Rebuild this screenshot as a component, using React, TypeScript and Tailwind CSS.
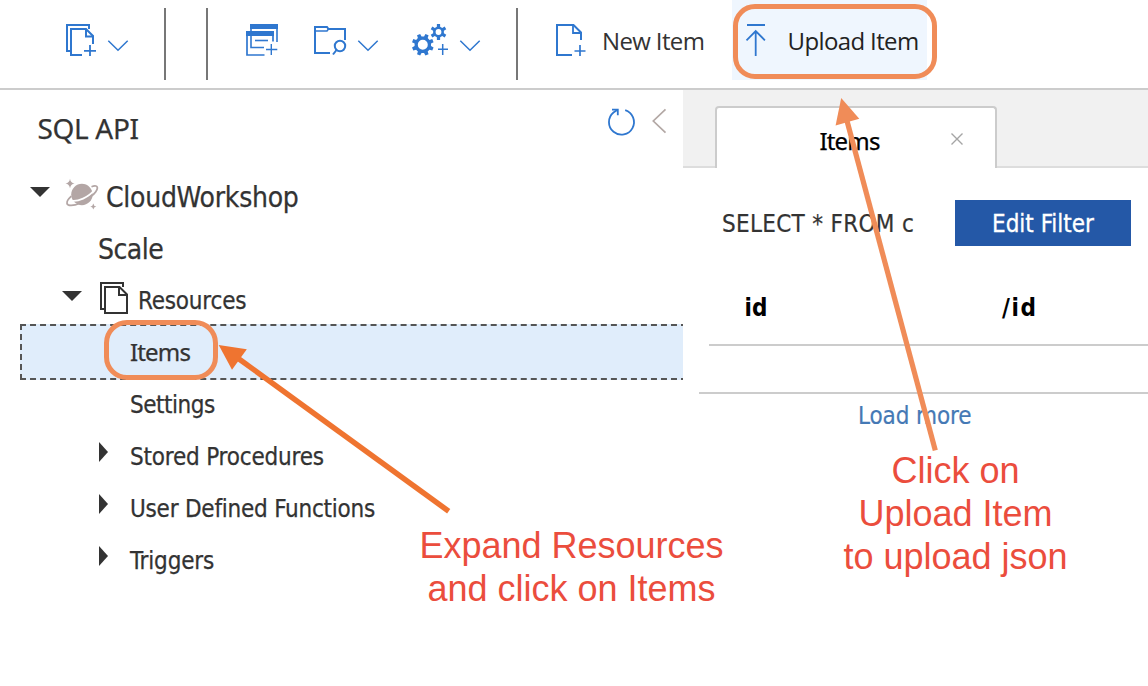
import type { ReactNode } from 'react';

const BLUE = '#2f77cf';

function Icon({ box, className = '', children }: { box: string; className?: string; children: ReactNode }) {
  const [, , w, h] = box.split(' ');
  return (
    <svg viewBox={box} width={w} height={h} fill="none" className={`shrink-0 ${className}`}>
      {children}
    </svg>
  );
}

function gear(cx: number, cy: number, teeth: number, root: number, outer: number, half: number, offset: number) {
  const points: string[] = [];
  const step = 360 / teeth;
  const at = (r: number, deg: number) => {
    const a = (deg * Math.PI) / 180;
    points.push(`${(cx + r * Math.sin(a)).toFixed(2)} ${(cy - r * Math.cos(a)).toFixed(2)}`);
  };
  for (let i = 0; i < teeth; i++) {
    const c = offset + i * step;
    at(root, c - half * 1.25);
    at(outer, c - half * 0.8);
    at(outer, c + half * 0.8);
    at(root, c + half * 1.25);
  }
  return `M${points.join('L')}Z`;
}

function hole(cx: number, cy: number, r: number) {
  return `M${cx - r} ${cy}a${r} ${r} 0 1 0 ${2 * r} 0a${r} ${r} 0 1 0 ${-2 * r} 0Z`;
}

function Chevron({ className = '' }: { className?: string }) {
  return (
    <Icon box="0 0 24 36" className={className}>
      <path d="M2.3 18.7 12 28.3 21.7 18.7" stroke={BLUE} strokeWidth="1.5" />
    </Icon>
  );
}

function Separator({ className = '' }: { className?: string }) {
  return <div className={`h-[72px] w-0.5 shrink-0 self-end bg-[#777] ${className}`} />;
}

function Toolbar() {
  return (
    <header className="h-[90px] shrink-0 border-b-2 border-[#ccc]">
      <div className="flex h-20 items-center">
        <Icon box="64 22 34 36" className="ml-16">
          <path d="M89 29V25H67V51H70.5" stroke={BLUE} strokeWidth="2" />
          <path d="M82 55H71V29H86L93 36V44" stroke={BLUE} strokeWidth="2" />
          <path d="M86 29V36.5H93.5" stroke={BLUE} strokeWidth="2" />
          <path d="M84 50.8H96M90 45V56" stroke={BLUE} strokeWidth="1.8" />
        </Icon>
        <Chevron className="ml-2" />
        <Separator className="ml-[34px]" />
        <Separator className="ml-10" />
        <Icon box="244 22 36 36" className="ml-9">
          <path d="M250 24H278V29H250Z" fill={BLUE} />
          <path d="M251 28V47.5H264M277 28V42" stroke={BLUE} strokeWidth="1.6" />
          <path d="M246 31H274V36H246Z" fill={BLUE} />
          <path d="M247 35V55H264.5M273 35V41.5" stroke={BLUE} strokeWidth="1.7" />
          <path d="M255 40.5H268" stroke={BLUE} strokeWidth="1.6" />
          <path d="M266 49.5H277.3M271.3 44V55" stroke={BLUE} strokeWidth="1.4" />
        </Icon>
        <Icon box="312 22 38 36" className="ml-8">
          <path d="M330 53H315V27H327L328.5 29H345V40" stroke={BLUE} strokeWidth="2" />
          <path d="M315 31H327L328.5 29" stroke={BLUE} strokeWidth="1.6" />
          <circle cx="340" cy="46" r="5.2" stroke={BLUE} strokeWidth="2" />
          <path d="M336.5 50 333 54.5" stroke={BLUE} strokeWidth="2" />
        </Icon>
        <Chevron className="ml-1.5" />
        <Icon box="410 22 40 36" className="ml-[30px]">
          <path d={gear(422.8, 44.8, 8, 8.3, 11.1, 11, 22.5) + hole(422.8, 44.8, 5)} fill={BLUE} fillRule="evenodd" />
          <path d={gear(438.5, 32, 6, 5.5, 8.2, 14, 0) + hole(438.5, 32, 2.9)} fill={BLUE} fillRule="evenodd" />
          <path d="M438 49.3H448M442.7 44V55" stroke={BLUE} strokeWidth="1.5" />
        </Icon>
        <Chevron className="ml-2" />
        <Separator className="ml-[34px]" />
        <Icon box="554 22 34 36" className="ml-9">
          <path d="M572 55H557V25H573.5L581 32.5V40" stroke={BLUE} strokeWidth="2" />
          <path d="M573 25V33H581" stroke={BLUE} strokeWidth="1.8" />
          <path d="M574.5 51H585.5M580 45V56" stroke={BLUE} strokeWidth="1.7" />
        </Icon>
        <span className="ml-[14px] w-[130px] whitespace-nowrap pt-px font-['Open_Sans',sans-serif] text-2xl tracking-[-0.64px] text-[#333]">
          New Item
        </span>
        <button className="flex h-20 w-[195px] items-center bg-[#eff6fe]">
          <Icon box="744 22 24 36" className="ml-3">
            <path d="M747 25H765" stroke={BLUE} strokeWidth="2" />
            <path d="M755.7 56V31M746.5 40.3 755.7 31 764.9 40.3" stroke={BLUE} strokeWidth="1.8" />
          </Icon>
          <span className="ml-[19.5px] whitespace-nowrap pt-px font-['Open_Sans',sans-serif] text-2xl tracking-[-0.62px] text-[#222]">
            Upload Item
          </span>
        </button>
      </div>
    </header>
  );
}

function Expanded({ className = '' }: { className?: string }) {
  return (
    <Icon box="0 0 20 10" className={className}>
      <path d="M0 0H20L10 10Z" fill="#333" />
    </Icon>
  );
}

function LeafRow({ label, tracking, collapsed }: { label: string; tracking: string; collapsed?: boolean }) {
  return (
    <li className="flex h-[52px] items-center">
      <div className="flex w-[130px] shrink-0 pb-2 pl-[99px]">
        {collapsed && (
          <Icon box="0 0 9 20">
            <path d="M0 0V20L9 10Z" fill="#333" />
          </Icon>
        )}
      </div>
      <span className={`whitespace-nowrap pt-0.5 text-2xl ${tracking}`}>{label}</span>
    </li>
  );
}

function Sidebar() {
  return (
    <aside className="w-[683px] shrink-0 overflow-hidden pt-3 text-[#333] [-webkit-text-stroke:0.25px_#333]">
      <div className="flex h-[52px] items-center pl-[37.5px]">
        <h1 className="w-[568.5px] font-['Noto_Sans',sans-serif] text-[28px] tracking-[-0.34px]">SQL API</h1>
        <Icon box="606 106 32 32" className="mb-3">
          <path d="M625.2 110.2A12.5 12.5 0 1 1 613.5 112.5L617.5 109.8" stroke={BLUE} strokeWidth="1.8" />
          <path d="M612 109.6H617.8V115.2" stroke={BLUE} strokeWidth="1.8" />
        </Icon>
        <Icon box="650 107 18 28" className="mb-3.5 ml-3">
          <path d="M665.5 109.3 653.3 121 665.5 132.7" stroke="#b3a8a5" strokeWidth="1.7" />
        </Icon>
      </div>
      <ul className="mt-4">
        <li className="flex h-[52px] items-center">
          <Expanded className="mb-2 ml-[30px]" />
          <Icon box="64 177 36 34" className="mb-1 ml-3.5">
            <g fill="#b3a6a5">
              <circle cx="81.9" cy="194.5" r="10.7" />
              <path d="M70 178.700Q70.600 183 74.500 183.500Q70.600 184 70 188.300Q69.400 184 65.500 183.500Q69.400 183 70 178.700Z" />
              <path d="M93.300 203.500Q93.700 206.200 96.300 206.500Q93.700 206.900 93.300 209.500Q92.900 206.900 90.300 206.500Q92.900 206.200 93.300 203.500Z" />
            </g>
            <path d="M70.500 200.500C77 202.500 89.500 197 94.500 189.500" stroke="#fff" strokeWidth="1.8" />
            <path
              d="M91.500 186.700C95 185.200 97.800 185.700 97.300 188.500C96.500 192.500 89 199.500 80 203.300C73 206.200 67.300 206 67 203.300C66.800 201.300 68.500 198.800 71.300 196.200"
              stroke="#b3a6a5"
              strokeWidth="1.7"
            />
          </Icon>
          <span className="ml-1.5 pt-1 text-[28px] tracking-[-0.27px]">CloudWorkshop</span>
        </li>
        <li className="flex h-[52px] items-center pl-[98px] pt-1 text-[28px] tracking-[-0.5px]">Scale</li>
        <li className="flex h-[52px] items-center">
          <Expanded className="mb-2 ml-[62px]" />
          <Icon box="99 281 30 34" className="mb-1 ml-[17px]">
            <path d="M104.5 309H101V283H123V287" stroke="#333" strokeWidth="2" />
            <path d="M105 287H119.5L127 294.5V313H105Z" stroke="#333" strokeWidth="2" />
            <path d="M119 287V295H127" stroke="#333" strokeWidth="2" />
          </Icon>
          <span className="ml-[9px] pt-0.5 text-2xl tracking-[-0.2px]">Resources</span>
        </li>
        <li className="-my-0.5 -mr-1 ml-5 flex h-14 items-center border-2 border-dashed border-[#555] bg-[#e0edfb] pl-[108px]">
          <span className="font-['Noto_Sans',sans-serif] text-2xl tracking-[-0.85px]">Items</span>
        </li>
        <LeafRow label="Settings" tracking="tracking-[-0.48px]" />
        <LeafRow label="Stored Procedures" tracking="tracking-[-0.2px]" collapsed />
        <LeafRow label="User Defined Functions" tracking="tracking-[-0.23px]" collapsed />
        <LeafRow label="Triggers" tracking="tracking-[-0.15px]" collapsed />
      </ul>
    </aside>
  );
}

function DocumentsPane() {
  return (
    <main className="min-w-0 flex-1">
      <div className="flex h-[78px] items-end bg-[#f1f1f1]">
        <div className="w-8 self-stretch border-b-2 border-[#ddd]" />
        <div className="flex h-[62px] w-[282px] items-center rounded-t-[4px] border-x-2 border-t-2 border-[#ccc] bg-white text-black">
          <span className="w-[234px] pl-[102.5px] pt-1.5 font-['Noto_Sans',sans-serif] text-2xl tracking-[-0.85px] [-webkit-text-stroke:0.25px_#000]">
            Items
          </span>
          <Icon box="0 0 12 12" className="mt-0.5">
            <path d="M0.5 0.5 11.5 11.5M11.5 0.5 0.5 11.5" stroke="#a5a5a5" strokeWidth="1.4" />
          </Icon>
        </div>
        <div className="flex-1 self-stretch border-b-2 border-[#ddd]" />
      </div>
      <div className="mt-8 flex h-[46px] items-center pl-[39px]">
        <span className="w-[233px] whitespace-nowrap pt-0.5 text-2xl tracking-[0.3px] text-[#333] [-webkit-text-stroke:0.2px_#333]">
          SELECT * FROM c
        </span>
        <button className="h-[46px] w-[176px] bg-[#2458a7] pt-0.5 text-2xl text-white [-webkit-text-stroke:0.3px_#fff]">
          Edit Filter
        </button>
      </div>
      <div className="ml-[26px] mt-[26px] flex h-[74px] items-center border-b-2 border-[#ccc] pb-px text-2xl font-bold text-black">
        <span className="w-[257px] pl-[35.5px]">id</span>
        <span className="pl-9 tracking-[1.6px]">/id</span>
      </div>
      <div className="ml-4 h-12 border-b-2 border-[#ccc]" />
      <a className="ml-[175px] mt-[3px] block h-10 text-2xl leading-[38px] tracking-[-0.12px] text-[#4579b5] [-webkit-text-stroke:0.2px_#4579b5]">
        Load more
      </a>
    </main>
  );
}

function Annotations() {
  return (
    <div className="pointer-events-none absolute inset-0 font-['Liberation_Sans',Arial,sans-serif] text-4xl leading-[43px] text-[#eb4d3d]">
      <div className="absolute left-[733px] top-1 h-[75px] w-[204px] rounded-[22px] border-[5px] border-[#f08c58]" />
      <div className="absolute left-[104px] top-80 h-[60px] w-[114px] rounded-[23px] border-[5px] border-[#f08c58]" />
      <svg viewBox="0 0 1148 686" className="absolute inset-0 h-full w-full" fill="none">
        <path d="M846.5 119 935.3 450.3" stroke="#f08c58" strokeWidth="5.2" />
        <path d="M841.2 98 859.3 118.8 835.6 125.5Z" fill="#f08c58" />
        <path d="M238 358.2 448.7 511.3" stroke="#ef7430" strokeWidth="5.4" />
        <path d="M218.7 345 246.8 349.3 232 369.7Z" fill="#ef7430" />
      </svg>
      <p className="absolute left-[371.5px] top-[524px] w-[400px] text-center">
        Expand Resources
        <br />
        and click on Items
      </p>
      <p className="absolute left-[805.5px] top-[449px] w-[300px] text-center">
        Click on
        <br />
        Upload Item
        <br />
        to upload json
      </p>
    </div>
  );
}

export default function App() {
  return (
    <div className="relative flex h-[686px] w-[1148px] flex-col overflow-hidden bg-white font-['DejaVu_Sans_Condensed','DejaVu_Sans',sans-serif]">
      <Toolbar />
      <div className="flex min-h-0 flex-1">
        <Sidebar />
        <DocumentsPane />
      </div>
      <Annotations />
    </div>
  );
}
